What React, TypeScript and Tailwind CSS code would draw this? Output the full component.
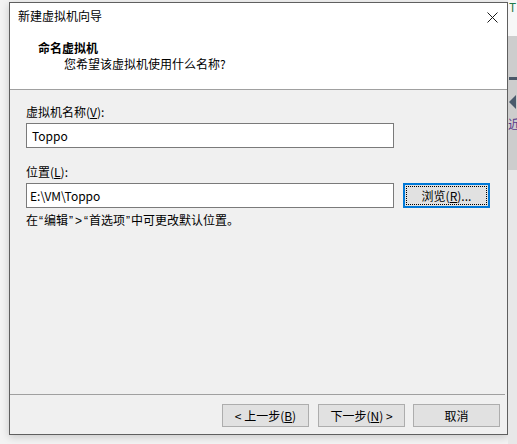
import React from "react";

const font = { fontFamily: '"Noto Sans CJK SC", "Noto Sans", sans-serif' };

function Btn({ children, w = "w-[87px]" }: { children: React.ReactNode; w?: string }) {
  return (
    <div
      className={`${w} h-[23px] bg-[#e1e1e1] border border-[#adadad] flex items-center justify-center text-[12px] leading-none text-black`}
    >
      {children}
    </div>
  );
}

function Q({ children }: { children: React.ReactNode }) {
  return (
    <span className="px-[1px] font-['Liberation_Sans',sans-serif]">{children}</span>
  );
}

export default function App() {
  return (
    <div className="w-[517px] h-[444px] flex flex-row overflow-hidden" style={font}>
      {/* left + dialog with shadow */}
      <div className="w-[508px] h-[444px] flex flex-col bg-[#f3f3f3] pt-[2px] pl-[9px]">
        <div className="w-[499px] h-[433px] border border-[#5f5f5f] flex flex-col bg-[#f0f0f0] shadow-[0_2px_8px_rgba(0,0,0,0.18)]">
          {/* header */}
          <div className="h-[87px] bg-white border-b border-[#a0a0a0] flex flex-col relative">
            <div className="pl-[8px] pt-[5px] text-[12px] leading-[16px] text-black">新建虚拟机向导</div>
            <svg className="absolute left-[477px] top-[9px]" width="11" height="11" viewBox="0 0 11 11">
              <path d="M0.5 0.5 L10.5 10.5 M10.5 0.5 L0.5 10.5" stroke="#1a1a1a" strokeWidth="1" />
            </svg>
            <div className="pl-[28px] pt-[16px] text-[12px] leading-[16px] font-bold text-black">命名虚拟机</div>
            <div className="pl-[54px] pt-[0px] text-[12px] leading-[16px] text-black">您希望该虚拟机使用什么名称?</div>
          </div>
          {/* body */}
          <div className="flex-1 flex flex-col pl-[16px] pt-[14px]">
            <div className="text-[12px] leading-[16px] text-black">
              虚拟机名称(<span className="underline">V</span>):
            </div>
            <div className="mt-[3px] w-[368px] h-[25px] bg-white border border-[#7a7a7a] flex items-center pl-[5px] text-[12px] text-black">
              Toppo
            </div>
            <div className="mt-[16px] text-[12px] leading-[16px] text-black">
              位置(<span className="underline">L</span>):
            </div>
            <div className="mt-[3px] flex flex-row items-center gap-[9px]">
              <div className="w-[368px] h-[25px] bg-white border border-[#7a7a7a] flex items-center pl-[3px] text-[12px] text-black">
                E:\VM\Toppo
              </div>
              <div className="w-[87px] h-[25px] bg-[#e1e1e1] border-2 border-[#0078d7] p-[1px]">
                <div className="w-full h-full border border-dotted border-black flex items-center justify-center text-[12px] leading-none text-black">
                  浏览(<span className="underline">R</span>)...
                </div>
              </div>
            </div>
            <div className="mt-[4px] text-[12px] leading-[16px] text-black">
              在<Q>“</Q>编辑<Q>”</Q><Q>&gt;</Q><Q>“</Q>首选项<Q>”</Q>中可更改默认位置。
            </div>
          </div>
          {/* footer */}
          <div className="h-[40px] flex flex-col">
            <div className="h-[1px] bg-[#a0a0a0] mr-[2px]" />
            <div className="flex flex-row justify-end pt-[9px] pr-[7px]">
              <Btn>&lt; 上一步(<span className="underline">B</span>)</Btn>
              <div className="w-[9px]" />
              <Btn>下一步(<span className="underline">N</span>) &gt;</Btn>
              <div className="w-[8px]" />
              <Btn>取消</Btn>
            </div>
          </div>
        </div>
      </div>
      {/* right strip of background app */}
      <div className="w-[9px] h-[444px] flex flex-col">
        <div className="h-[36px] bg-[#f7f7f7] pl-[1px] text-[12px] leading-[14px] text-[#1f7a4a] overflow-hidden">T</div>
        <div className="h-[134px] bg-[#cdcdcd] flex flex-col items-start">
          <div className="mt-[41px] ml-[1px] w-[8px] h-[3px] bg-[#4a5868]" />
          <svg className="mt-[15px]" width="9" height="14" viewBox="0 0 9 14">
            <path d="M8 0 L1 7 L8 14 Z" fill="#4a5a6c" />
          </svg>
          <div className="mt-[8px] text-[12px] leading-[14px] text-[#5a3a8a] overflow-hidden w-[9px]">近</div>
        </div>
        <div className="flex-1 bg-[#e8e8e8]" />
      </div>
    </div>
  );
}
